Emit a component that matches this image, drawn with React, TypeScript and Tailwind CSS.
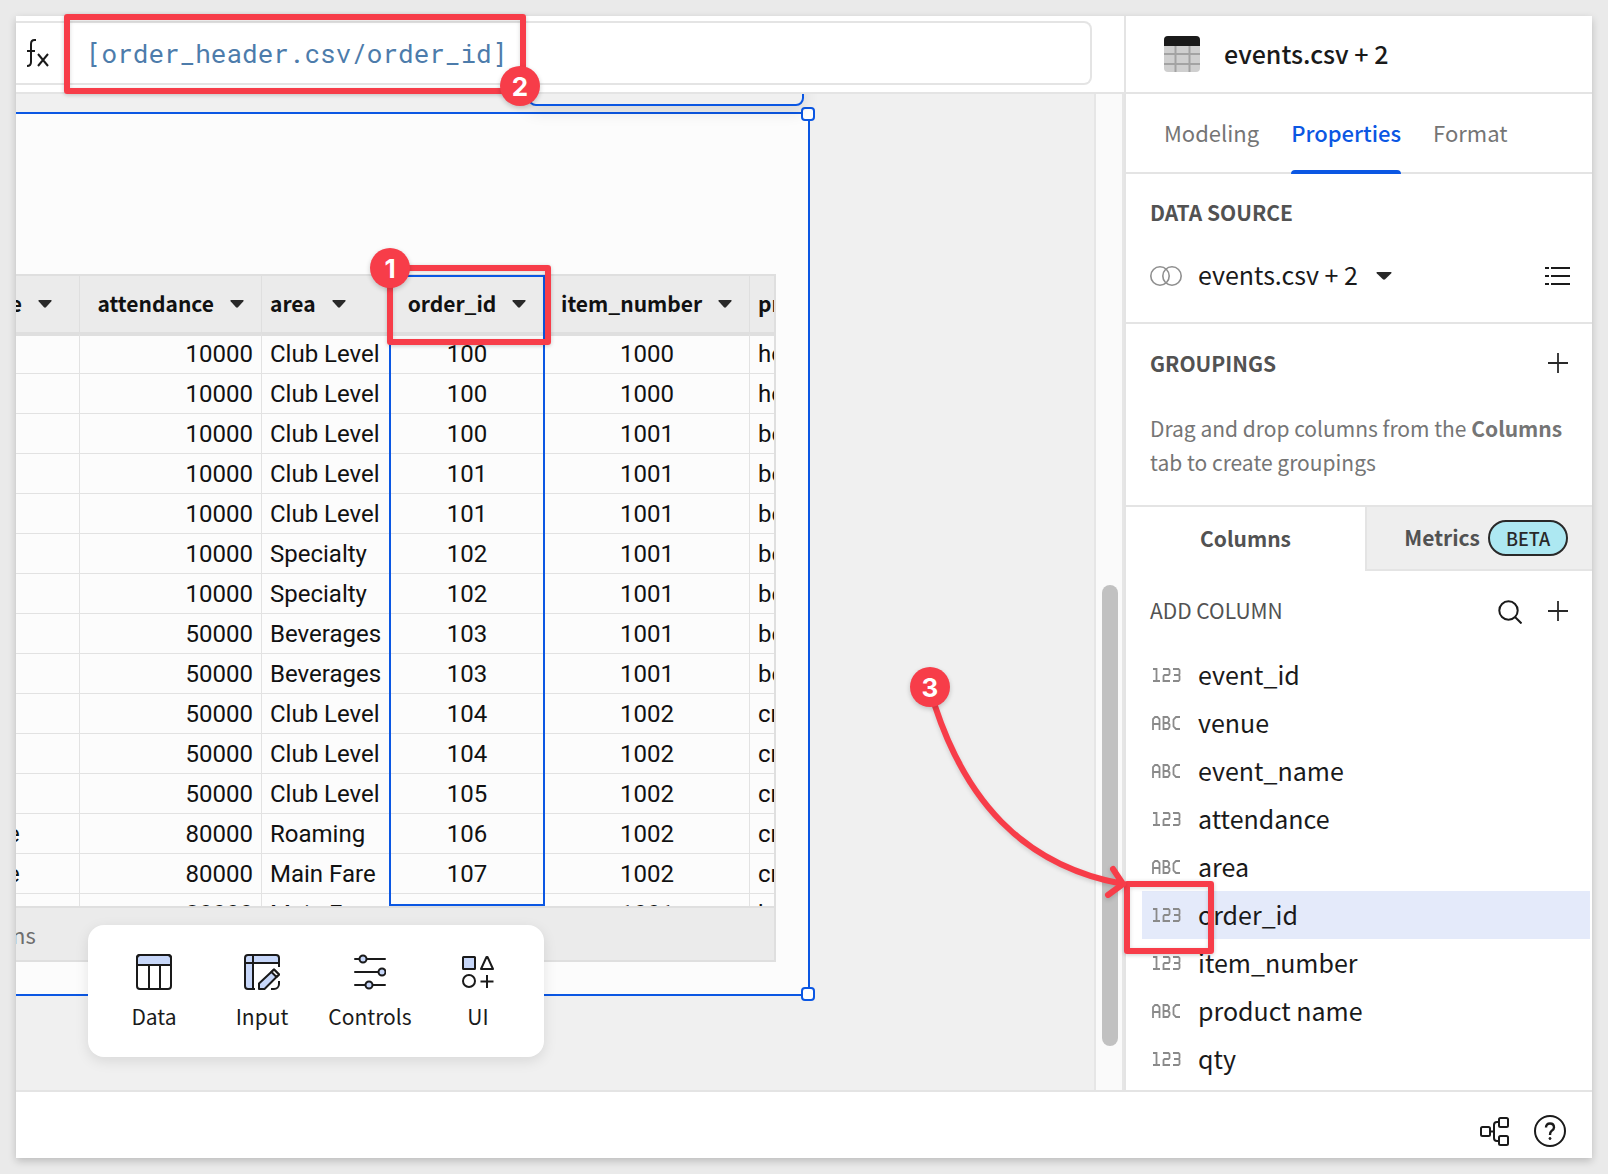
type ColumnType = "123" | "ABC";

const columns: { type: ColumnType; name: string; selected?: boolean }[] = [
  { type: "123", name: "event_id" },
  { type: "ABC", name: "venue" },
  { type: "ABC", name: "event_name" },
  { type: "123", name: "attendance" },
  { type: "ABC", name: "area" },
  { type: "123", name: "order_id", selected: true },
  { type: "123", name: "item_number" },
  { type: "ABC", name: "product name" },
  { type: "123", name: "qty" },
];

const rows = [
  ["", "10000", "Club Level", "100", "1000", "hotdog"],
  ["", "10000", "Club Level", "100", "1000", "hotdog"],
  ["", "10000", "Club Level", "100", "1001", "beer"],
  ["", "10000", "Club Level", "101", "1001", "beer"],
  ["", "10000", "Club Level", "101", "1001", "beer"],
  ["", "10000", "Specialty", "102", "1001", "beer"],
  ["", "10000", "Specialty", "102", "1001", "beer"],
  ["", "50000", "Beverages", "103", "1001", "beer"],
  ["", "50000", "Beverages", "103", "1001", "beer"],
  ["", "50000", "Club Level", "104", "1002", "cracker"],
  ["", "50000", "Club Level", "104", "1002", "cracker"],
  ["", "50000", "Club Level", "105", "1002", "cracker"],
  ["e", "80000", "Roaming", "106", "1002", "cracker"],
  ["e", "80000", "Main Fare", "107", "1002", "cracker"],
  ["", "80000", "Main Fare", "108", "1001", "beer"],
];

const tools = [
  { label: "Data", icon: <DataIcon /> },
  { label: "Input", icon: <InputIcon /> },
  { label: "Controls", icon: <ControlsIcon /> },
  { label: "UI", icon: <UiIcon /> },
];

function Caret({ className = "w-[14px]" }: { className?: string }) {
  return (
    <svg viewBox="0 0 14 8" className={`h-2 shrink-0 ${className}`} preserveAspectRatio="none" aria-hidden="true">
      <path d="M1 0h12q1 0.400 0.400 1.200L8 7.300q-1 0.900-2 0L0.600 1.200Q0 0.400 1 0z" fill="#292929" />
    </svg>
  );
}

function DataIcon() {
  return (
    <svg width="36" height="36" viewBox="0 0 36 36" fill="none" stroke="#1a1a1a" strokeWidth="2">
      <path d="M1 11V4a3 3 0 0 1 3-3h28a3 3 0 0 1 3 3v7z" fill="#c7d7f9" />
      <rect x="1" y="1" width="34" height="34" rx="3" />
      <path d="M1 11h34M13 11v24M24 11v24" />
    </svg>
  );
}

function InputIcon() {
  return (
    <svg width="36" height="36" viewBox="0 0 36 36" fill="none" stroke="#1a1a1a" strokeWidth="2">
      <path d="M1 4a3 3 0 0 1 3-3h28a3 3 0 0 1 3 3v5H9v26H4a3 3 0 0 1-3-3z" fill="#c7d7f9" stroke="none" />
      <path d="M35 13V4a3 3 0 0 0-3-3H4a3 3 0 0 0-3 3v28a3 3 0 0 0 3 3h7M1 9h34M9 1v34M35 27v3a5 5 0 0 1-5 5h-3" />
      <path d="M15 35v-5.500l15-14 5 5L20.500 35z" fill="#c7d7f9" strokeLinejoin="round" />
      <path d="M30 15.500l5 5-2.500 2.500-5-5z" fill="#fff" strokeLinejoin="round" />
    </svg>
  );
}

function ControlsIcon() {
  return (
    <svg width="32" height="36" viewBox="0 0 32 36" fill="none" stroke="#1a1a1a" strokeWidth="2" strokeLinecap="round">
      <path d="M1 5h30M1 18h30M1 31h30" />
      <circle cx="9" cy="5" r="3.500" fill="#c7d7f9" />
      <circle cx="28" cy="18" r="3.500" fill="#c7d7f9" />
      <circle cx="15" cy="31" r="3.500" fill="#c7d7f9" />
    </svg>
  );
}

function UiIcon() {
  return (
    <svg width="32" height="36" viewBox="0 0 32 36" fill="none" stroke="#1a1a1a" strokeWidth="2" strokeLinejoin="round">
      <rect x="1" y="3" width="12" height="12" rx="0.500" fill="#c7d7f9" />
      <path d="M25.500 3L31 15H19L24.500 3z" />
      <circle cx="7" cy="27" r="6" />
      <path d="M25 21v13M18.500 27.500h13" />
    </svg>
  );
}

function PlusIcon() {
  return (
    <svg width="20" height="20" viewBox="0 0 20 20" stroke="#292929" strokeWidth="1.800" aria-hidden="true">
      <path d="M10 0v20M0 10h20" />
    </svg>
  );
}

// Small squared-off type markers shown before each column name.
function TypeIcon({ type }: { type: ColumnType }) {
  return (
    <svg
      width="30"
      height="16"
      viewBox="0 0 30 16"
      fill="none"
      stroke="#8a8a8a"
      strokeWidth="1.800"
      role="img"
      aria-label={type === "123" ? "Number" : "Text"}
    >
      {type === "123" ? (
        <path d="M1 2h3.500v12M1 14h7M11 2h5.500l1 1v4l-1 1h-4l-1 1v5h6.500M21 2h5.500l1 1v4l-1 1H22h4.500l1 1v4l-1 1H21" />
      ) : (
        <path d="M1 15V4l2-2h2.500l2 2v11M1 9h6.500M11.500 14V2h4l1.500 1.500V6l-1.500 2h-4h4l2 1.500V12L16 14zM28 2h-4l-2.500 2.500v7L24 14h4" />
      )}
    </svg>
  );
}

function Badge({ n, className }: { n: number; className: string }) {
  return (
    <span
      className={`absolute z-30 flex size-10 items-center justify-center rounded-full bg-[#f73d49] font-[Inter,sans-serif] text-[26px] font-bold text-white shadow-[0_2px_5px_rgba(0,0,0,0.2)] ${className}`}
    >
      {n}
    </span>
  );
}

function Callout({ className }: { className: string }) {
  return (
    <span
      className={`pointer-events-none absolute z-20 rounded-[3px] border-[6px] border-[#f73d49] shadow-[0_1px_4px_rgba(0,0,0,0.2),inset_0_1px_4px_rgba(0,0,0,0.15)] ${className}`}
    />
  );
}

function FormulaBar() {
  return (
    <header className="h-[78px] border-b-2 border-[#e4e4e4] bg-white pt-[5px] pr-8">
      <div className="relative flex h-16 items-center rounded-r-lg border-y-2 border-r-2 border-[#e4e4e4]">
        <svg
          width="24"
          height="30"
          viewBox="0 0 24 30"
          fill="none"
          stroke="#1a1a1a"
          strokeWidth="2"
          className="ml-[10px] shrink-0"
        >
          <path d="M10 2H8.500Q5 2 5 6v18q0 4-4 4M1 13h8M12 16l10 12M22 16L12 28" />
        </svg>
        <input
          aria-label="Formula"
          defaultValue="[order_header.csv/order_id]"
          className="ml-9 min-w-0 flex-1 bg-transparent font-['Roboto_Mono','Liberation_Mono',monospace] text-[26px] text-[#4d7cab] outline-none"
        />
        <Callout className="-top-[9px] left-12 h-20 w-[462px]" />
        <Badge n={2} className="top-[43px] left-[484px]" />
      </div>
    </header>
  );
}

const heads = [
  { label: "e", className: "justify-end pr-[27px]" },
  { label: "attendance", className: "justify-end pr-[17px]" },
  { label: "area", className: "pl-2" },
  { label: "order_id", className: "justify-center" },
  { label: "item_number", className: "pl-4" },
  { label: "product name", className: "pl-2" },
];

const cellAlign = ["-indent-[9px]", "text-right pr-2", "pl-2", "text-center", "text-center", "pl-2"];

function DataTable() {
  return (
    <div className="relative w-[760px]">
      <div className="h-[632px] overflow-hidden border-t-2 border-r-2 border-[#dfdfdf]">
        <table className="w-[950px] table-fixed border-separate border-spacing-0 text-left">
          <colgroup>
            <col className="w-16" />
            <col className="w-[182px]" />
            <col className="w-32" />
            <col className="w-[155px]" />
            <col className="w-[205px]" />
            <col />
          </colgroup>
          <thead>
            <tr className="h-[58px]">
              {heads.map((h) => (
                <th
                  key={h.label}
                  className="border-r border-b-2 border-[#dfdfdf] bg-[#ebebeb] p-0 text-[21px] font-bold text-[#111] shadow-[0_2px_0_#dfdfdf]"
                >
                  <button className={`flex w-full items-center gap-4 whitespace-nowrap ${h.className}`}>
                    {h.label}
                    <Caret />
                  </button>
                </th>
              ))}
            </tr>
          </thead>
          <tbody className="font-[Roboto,sans-serif] text-[24px] leading-8 text-[#111]">
            {rows.map((row, i) => (
              <tr key={i} className="h-10">
                {row.map((cell, j) => (
                  <td
                    key={j}
                    className={`overflow-hidden border-r border-b border-[#e2e2e2] p-0 whitespace-nowrap ${cellAlign[j]}`}
                  >
                    {cell}
                  </td>
                ))}
              </tr>
            ))}
          </tbody>
        </table>
      </div>
      <div className="flex h-14 items-center overflow-hidden border-y-2 border-r-2 border-[#dfdfdf] bg-[#ebebeb] -indent-1 text-[22px] text-[#6e6e6e]">
        ns
      </div>
      <span className="pointer-events-none absolute top-px left-[373px] h-[631px] w-[156px] border-2 border-[#0b57e3]" />
      <Callout className="-top-[9px] left-[371px] h-20 w-[164px]" />
      <Badge n={1} className="-top-[26px] left-[354px]" />
    </div>
  );
}

function Toolbar() {
  return (
    <div className="absolute bottom-[33px] left-[72px] z-10 flex h-[132px] w-[456px] justify-center rounded-2xl bg-white pt-[29px] shadow-[0_4px_14px_rgba(0,0,0,0.1)]">
      {tools.map((t) => (
        <button
          key={t.label}
          className="flex h-fit w-[108px] flex-col items-center gap-[10px] text-[21px] leading-8 text-[#1a1a1a]"
        >
          {t.icon}
          {t.label}
        </button>
      ))}
    </div>
  );
}

function Canvas() {
  return (
    <div className="flex min-h-0 flex-1">
      <main className="relative min-w-0 flex-1 overflow-hidden bg-[#f0f0f0] pt-[18px]">
        <section className="relative h-[884px] w-[794px] border-y-2 border-r-2 border-[#0b57e3] bg-[#fcfcfc] pt-[160px]">
          <DataTable />
          <span className="absolute -top-[7px] -right-[7px] size-[14px] rounded-[4px] border-2 border-[#0b57e3] bg-white" />
          <span className="absolute -right-[7px] -bottom-[7px] size-[14px] rounded-[4px] border-2 border-[#0b57e3] bg-white" />
        </section>
        <div className="absolute -top-4 left-[512px] h-7 w-[276px] rounded-b-lg border-2 border-[#0b57e3] bg-[#f0f0f0] shadow-[0_6px_16px_rgba(0,0,0,0.1)]" />
        <Toolbar />
      </main>
      <div className="relative w-[30px] border-x-2 border-[#e6e6e6] bg-[#fafafa]">
        <span className="absolute bottom-[44px] left-[6px] h-[461px] w-4 rounded-full bg-[#c1c1c1]" />
      </div>
    </div>
  );
}

function Sidebar() {
  return (
    <aside className="w-[468px] shrink-0 border-l-2 border-[#e4e4e4] bg-white">
      <div className="flex h-[78px] items-center gap-6 border-b-2 border-[#e4e4e4] pl-[38px]">
        <svg width="36" height="36" viewBox="0 0 36 36">
          <rect width="36" height="36" rx="4" fill="#cfcfcf" />
          <path d="M0 18h36M0 28h36M11.500 10v26M25.500 10v26" stroke="#a3a3a3" strokeWidth="2" />
          <path d="M0 10V4a4 4 0 0 1 4-4h28a4 4 0 0 1 4 4v6z" fill="#1a1a1a" />
        </svg>
        <h1 className="text-[25px] font-medium text-[#1a1a1a]">events.csv + 2</h1>
      </div>

      <nav className="flex h-20 gap-8 border-b-2 border-[#e4e4e4] pl-[38px] text-[22px] text-[#757575]">
        <button className="pb-[2px]">Modeling</button>
        <button className="relative pb-[2px] font-medium text-[#0b57e3]">
          Properties
          <span className="absolute inset-x-0 -bottom-[2px] h-1 rounded-t bg-[#0b57e3]" />
        </button>
        <button className="pb-[2px]">Format</button>
      </nav>

      <section className="h-[150px] border-b-2 border-[#e4e4e4] px-6 pt-[22px]">
        <h2 className="text-[21px] leading-8 font-bold text-[#525252]">DATA SOURCE</h2>
        <div className="mt-7 flex items-center">
          <svg
            width="32"
            height="20"
            viewBox="0 0 32 20"
            fill="none"
            stroke="#8f8f8f"
            strokeWidth="1.600"
            className="mt-1"
          >
            <circle cx="10" cy="10" r="9.200" />
            <circle cx="22" cy="10" r="9.200" />
          </svg>
          <button className="ml-4 flex items-center gap-[18px] text-[25px] leading-9 text-[#1a1a1a]">
            events.csv + 2
            <Caret className="mt-1 w-4" />
          </button>
          <button aria-label="Source details" className="mt-1 -mr-[2px] ml-auto">
            <svg width="25" height="18" viewBox="0 0 25 18" stroke="#1a1a1a" strokeWidth="2">
              <path d="M0 1h4M6 1h19M0 9h4M6 9h19M0 17h4M6 17h19" />
            </svg>
          </button>
        </div>
      </section>

      <section className="h-[183px] border-b-2 border-[#e4e4e4] px-6 pt-[23px]">
        <div className="flex items-center justify-between">
          <h2 className="text-[21px] leading-8 font-bold text-[#525252]">GROUPINGS</h2>
          <button aria-label="Add grouping">
            <PlusIcon />
          </button>
        </div>
        <p className="mt-8 text-[21px] leading-[34px] whitespace-nowrap text-[#757575]">
          Drag and drop columns from the <b className="font-bold">Columns</b>
          <br />
          tab to create groupings
        </p>
      </section>

      <div className="flex h-16 text-[21px] font-bold text-[#525252]">
        <button className="w-[239px]">Columns</button>
        <button className="flex flex-1 items-center justify-end gap-2 border-b-2 border-l-2 border-[#e4e4e4] bg-[#eee] pr-6">
          Metrics
          <span className="flex h-9 w-20 items-center justify-center rounded-full border-2 border-[#292929] bg-[#ade8f2] text-[18px] font-medium text-[#292929]">
            BETA
          </span>
        </button>
      </div>

      <div className="flex h-20 items-center px-6">
        <h3 className="text-[21px] text-[#525252]">ADD COLUMN</h3>
        <button aria-label="Search columns" className="mt-[2px] ml-auto">
          <svg width="24" height="24" viewBox="0 0 24 24" fill="none" stroke="#1a1a1a" strokeWidth="2">
            <circle cx="10.500" cy="10.500" r="9.200" />
            <path d="M17 17l6.500 6.500" />
          </svg>
        </button>
        <button aria-label="Add column" className="ml-[26px]">
          <PlusIcon />
        </button>
      </div>

      <ul className="pr-[2px] pb-[7px] pl-4 text-[25px] text-[#1a1a1a]">
        {columns.map((c) => (
          <li
            key={c.name}
            className={`relative flex h-12 items-center gap-4 pl-[10px] ${c.selected ? "bg-[#e4eafa]" : ""}`}
          >
            <TypeIcon type={c.type} />
            {c.name}
            {c.selected && <OrderCallout />}
          </li>
        ))}
      </ul>
    </aside>
  );
}

// Highlights the type marker and points at it from the canvas.
function OrderCallout() {
  return (
    <>
      <Callout className="-top-[10px] -left-[18px] h-[73px] w-[90px]" />
      <svg
        width="220"
        height="204"
        viewBox="0 0 220 204"
        fill="none"
        stroke="#f73d49"
        strokeWidth="6"
        strokeLinecap="round"
        strokeLinejoin="round"
        className="pointer-events-none absolute -top-[191px] -left-[222px] z-20 drop-shadow-[0_2px_2px_rgba(0,0,0,0.15)]"
      >
        <path d="M15 6C45 97 100 165 203 184M193 169l10 15-15 11" />
      </svg>
      <Badge n={3} className="-top-[224px] -left-[232px]" />
    </>
  );
}

export default function App() {
  return (
    <div className="flex min-h-screen flex-col overflow-hidden bg-[#eaeaea] p-4 font-['Source_Sans_Pro','Noto_Sans_CJK_SC',sans-serif]">
      <div className="flex flex-1 flex-col shadow-[0_3px_8px_rgba(0,0,0,0.2)]">
        <div className="flex flex-1">
          <div className="flex min-w-0 flex-1 flex-col">
            <FormulaBar />
            <Canvas />
          </div>
          <Sidebar />
        </div>
        <footer className="flex h-[68px] items-center justify-end gap-6 border-t-2 border-[#e4e4e4] bg-white pt-3 pr-[26px]">
          <button aria-label="Lineage">
            <svg width="30" height="30" viewBox="0 0 30 30" fill="none" stroke="#1a1a1a" strokeWidth="2">
              <rect x="1" y="11" width="9" height="9" rx="1.500" />
              <rect x="19" y="2" width="9" height="9" rx="1.500" />
              <rect x="19" y="20" width="9" height="9" rx="1.500" />
              <path d="M10 15.500h4M19 6h-2q-3 0-3 3v13q0 3 3 3h2" />
            </svg>
          </button>
          <button aria-label="Help">
            <svg width="32" height="32" viewBox="0 0 32 32" fill="none" stroke="#1a1a1a" strokeWidth="2">
              <circle cx="16" cy="16" r="15" />
              <path d="M12 12.500q0-4 4-4t4 4q0 2-2.500 3.500Q16 17 16 20" strokeWidth="2.400" />
              <circle cx="16" cy="23.500" r="1" fill="#1a1a1a" strokeWidth="1" />
            </svg>
          </button>
        </footer>
      </div>
    </div>
  );
}
